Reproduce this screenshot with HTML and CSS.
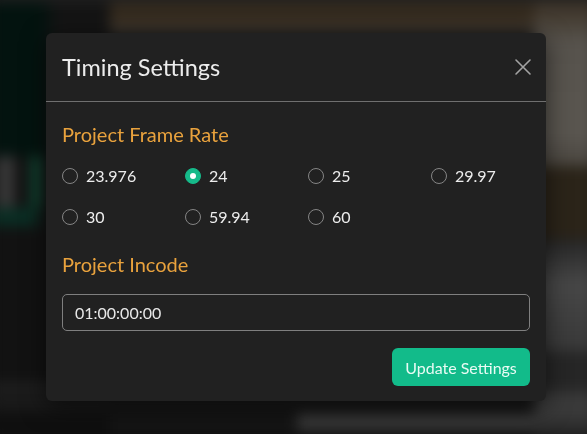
FILE: index.html
```html
<!DOCTYPE html>
<html lang="en">
<head>
<meta charset="utf-8">
<title>Timing Settings</title>
<link rel="stylesheet" href="styles.css">
</head>
<body>
<div class="backdrop" aria-hidden="true">
  <div class="bd-top"></div>
  <div class="bd-main">
    <div class="bd-side">
      <div class="bd-side-top"></div>
      <div class="bd-side-mark"></div>
      <div class="bd-side-green"></div>
      <div class="bd-side-rest"></div>
    </div>
    <div class="bd-center">
      <div class="bd-brown"></div>
      <div class="bd-fill"></div>
      <div class="bd-foot"><span class="bd-footbar"></span></div>
    </div>
    <div class="bd-right">
      <div class="bd-gray"></div>
      <div class="bd-darkbrown"></div>
      <div class="bd-gray2"></div>
      <div class="bd-bottom"></div>
    </div>
  </div>
</div>

<div class="overlay">
  <div class="modal" role="dialog" aria-labelledby="dlg-title">
    <div class="modal-header">
      <h2 class="modal-title" id="dlg-title">Timing Settings</h2>
      <button class="close-btn" aria-label="Close">
        <svg width="18" height="18" viewBox="0 0 18 18"><path d="M2 2L16 16M16 2L2 16" stroke="#a3a3a3" stroke-width="1.6" fill="none" stroke-linecap="round"/></svg>
      </button>
    </div>
    <div class="modal-body">
      <h3 class="section-title">Project Frame Rate</h3>
      <div class="radio-grid">
        <label class="radio"><span class="dot"></span><span class="radio-label">23.976</span></label>
        <label class="radio"><span class="dot checked"></span><span class="radio-label">24</span></label>
        <label class="radio"><span class="dot"></span><span class="radio-label">25</span></label>
        <label class="radio"><span class="dot"></span><span class="radio-label">29.97</span></label>
        <label class="radio"><span class="dot"></span><span class="radio-label">30</span></label>
        <label class="radio"><span class="dot"></span><span class="radio-label">59.94</span></label>
        <label class="radio"><span class="dot"></span><span class="radio-label">60</span></label>
      </div>
      <h3 class="section-title incode-title">Project Incode</h3>
      <div class="text-input">01:00:00:00</div>
      <div class="actions">
        <button class="primary-btn">Update Settings</button>
      </div>
    </div>
  </div>
</div>
</body>
</html>
```

FILE: styles.css
```css
* { box-sizing: border-box; }

html, body {
  margin: 0;
  padding: 0;
  width: 587px;
  height: 434px;
  overflow: hidden;
  background: #151515;
  font-family: Lato, "Open Sans", sans-serif;
}

/* blurred page behind the dialog */
.backdrop {
  width: 587px;
  height: 434px;
  display: flex;
  flex-direction: column;
  filter: blur(6px);
  transform: scale(1.03);
}
.bd-top { height: 8px; background: #252525; flex: none; }
.bd-main { flex: 1; display: flex; }

.bd-side { width: 115px; display: flex; flex-direction: column; background: #121212; }
.bd-side-top { height: 150px; background: linear-gradient(90deg, #03130f 0 42%, #141414 55%); }
.bd-side-mark { height: 50px; background: linear-gradient(90deg, #121212 0 4%, #3a3a3a 6% 16%, #131313 22% 34%, #0c553b 35% 40%, #151515 42%); }
.bd-side-green { height: 18px; background: linear-gradient(90deg, #0a2e24 0 36%, #131313 44%); }
.bd-side-rest { flex: 1; background: linear-gradient(180deg, #121212 0 72%, #262626 75%, #121212 79%, #202020 82%, #0f0f0f 88%); }

.bd-center { flex: 1; display: flex; flex-direction: column; }
.bd-brown { height: 30px; background: linear-gradient(180deg, #30271b, #382e22 70%, #433e38); }
.bd-fill { flex: 1; background: #1b1b1b; }
.bd-foot { height: 34px; background: #141414; display: flex; justify-content: flex-end; padding-top: 8px; }
.bd-footbar { width: 230px; height: 16px; background: #383838; }

.bd-right { width: 60px; display: flex; flex-direction: column; }
.bd-gray { height: 160px; background: linear-gradient(180deg, #3a3024, #57534d 25%, #5a5650 80%, #4a463f); }
.bd-darkbrown { height: 70px; background: #2b2419; }
.bd-gray2 { height: 110px; background: linear-gradient(180deg, #252525, #474747 40%, #383838); }
.bd-bottom { flex: 1; background: linear-gradient(180deg, #262626 0 40%, #3a3a3a 50% 70%, #1f1f1f); }

.overlay {
  position: fixed;
  inset: 0;
  padding: 33px 0 0 46px;
}

.modal {
  width: 500px;
  height: 368px;
  background: #212121;
  border-radius: 6px;
  box-shadow: 0 6px 24px rgba(0, 0, 0, 0.55);
  display: flex;
  flex-direction: column;
}

.modal-header {
  height: 69px;
  flex: none;
  display: flex;
  align-items: center;
  justify-content: space-between;
  padding: 0 14px 1px 16px;
  border-bottom: 1px solid #6f6f6f;
}
.modal-title {
  margin: 0;
  font-size: 23.5px;
  font-weight: 400;
  color: #ececec;
}
.close-btn {
  background: none;
  border: 0;
  padding: 0;
  width: 18px;
  height: 18px;
  display: flex;
}

.modal-body {
  flex: 1;
  padding: 20px 16px 15px;
  display: flex;
  flex-direction: column;
}

.section-title {
  margin: 0;
  font-size: 20px;
  line-height: 24px;
  font-weight: 400;
  color: #e9a23d;
}

.radio-grid {
  margin-top: 9px;
  display: grid;
  grid-template-columns: 123px 123px 123px 99px;
  grid-auto-rows: 41px;
}
.radio {
  display: flex;
  align-items: center;
  gap: 8px;
}
.dot {
  width: 16px;
  height: 16px;
  border-radius: 50%;
  border: 1px solid #858585;
  display: flex;
  align-items: center;
  justify-content: center;
  flex: none;
}
.dot.checked {
  background: #16ba8a;
  border-color: #16ba8a;
}
.dot.checked::after {
  content: "";
  width: 6px;
  height: 6px;
  border-radius: 50%;
  background: #ffffff;
}
.radio-label {
  font-size: 16px;
  color: #ededed;
}

.incode-title { margin-top: 15px; }

.text-input {
  margin-top: 18px;
  height: 37px;
  border: 1px solid #7f7f7f;
  border-radius: 5px;
  padding: 0 12px;
  display: flex;
  align-items: center;
  font-size: 16px;
  color: #e8e8e8;
}

.actions {
  margin-top: 17px;
  display: flex;
  justify-content: flex-end;
}
.primary-btn {
  height: 38px;
  width: 138px;
  border: 0;
  border-radius: 6px;
  background: #12bb8a;
  color: #e9fbf4;
  font-family: Lato, "Open Sans", sans-serif;
  font-size: 16px;
  padding: 0;
}
```
